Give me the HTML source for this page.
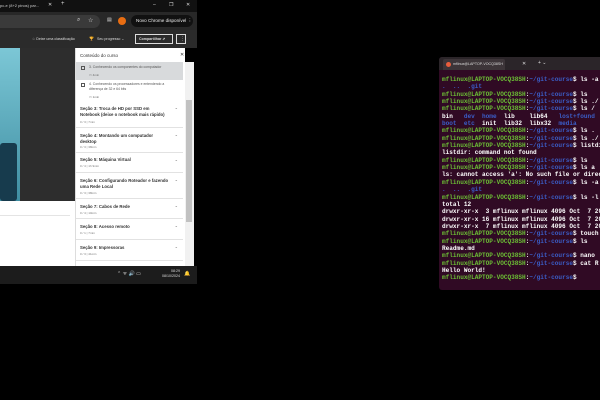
<!DOCTYPE html>
<html><head><style>
*{margin:0;padding:0;box-sizing:border-box}
body{width:600px;height:400px;background:#000;position:relative;overflow:hidden;font-family:"Liberation Sans",sans-serif}
.a{position:absolute}
.t{font-size:4px;color:#ddd;white-space:nowrap}
.sec{position:absolute;left:76px;width:107px;border-bottom:1px solid #e2e2e2;background:#fff}
.sec b{position:absolute;left:4px;font-size:4.3px;color:#333;line-height:5.5px;width:90px}
.sec i{position:absolute;left:4px;font-style:normal;font-size:3px;color:#777}
.sec s{position:absolute;right:5px;top:4px;text-decoration:none;font-size:4px;color:#666}
.term{position:absolute;left:439px;top:57px;width:161px;height:233px;background:#300a24;border-radius:3px 0 0 3px;overflow:hidden}
.tl{position:absolute;left:3px;font-family:"Liberation Mono",monospace;font-weight:bold;font-size:6.07px;white-space:pre;color:#fff;line-height:7.35px}
.g{color:#6cbf35}.bl{color:#3b5ec8}
</style></head><body>
<!-- browser -->
<div class="a" style="left:0;top:0;width:197px;height:12px;background:#111"></div>
<div class="a t" style="left:0;top:3px;font-size:4px;color:#ccc">pc-e (8+2 pinos) par...</div>
<div class="a t" style="left:48px;top:2px;font-size:5px">✕</div>
<div class="a t" style="left:61px;top:1px;font-size:6px">+</div>
<div class="a t" style="left:153px;top:2px;font-size:5px">–</div>
<div class="a t" style="left:169px;top:2px;font-size:5px">❐</div>
<div class="a t" style="left:186px;top:2px;font-size:5px">✕</div>
<div class="a" style="left:0;top:12px;width:197px;height:18px;background:#282828"></div>
<div class="a" style="left:0;top:15px;width:100px;height:13px;background:#3a3a3a;border-radius:0 7px 7px 0"></div>
<div class="a t" style="left:77px;top:17px;font-size:6px">⌕</div>
<div class="a t" style="left:88px;top:17px;font-size:6px">☆</div>
<div class="a t" style="left:107px;top:17px;font-size:5px">▤</div>
<div class="a" style="left:118px;top:17px;width:8px;height:8px;border-radius:50%;background:#e86d12"></div>
<div class="a" style="left:131px;top:15px;width:62px;height:12px;border-radius:6px;background:#111"></div>
<div class="a t" style="left:136px;top:18px;font-size:4.6px;color:#eee">Novo Chrome disponível ⋮</div>
<div class="a" style="left:0;top:30px;width:197px;height:18px;background:#2b2b2b"></div>
<div class="a t" style="left:32px;top:37px;font-size:3.6px">☆ Deixe uma classificação</div>
<div class="a t" style="left:89px;top:36px;font-size:4px">🏆</div>
<div class="a t" style="left:97px;top:37px;font-size:3.6px">Seu progresso ⌄</div>
<div class="a" style="left:135px;top:34px;width:38px;height:10px;border:1px solid #ddd"></div>
<div class="a t" style="left:139px;top:37px;font-size:3.6px;font-weight:bold">Compartilhar ⇗</div>
<div class="a" style="left:176px;top:34px;width:10px;height:10px;border:1px solid #ddd"></div>
<div class="a t" style="left:180px;top:36px;font-size:5px">⋮</div>
<div class="a" style="left:0;top:48px;width:20px;height:153px;background:linear-gradient(#7cc7d6,#3f8ea2)"></div>
<div class="a" style="left:0;top:143px;width:17px;height:58px;background:#173b4d;border-radius:3px"></div>
<div class="a" style="left:20px;top:48px;width:56px;height:153px;background:#2d2d2d"></div>
<div class="a" style="left:0;top:201px;width:76px;height:65px;background:#fff"></div>
<div class="a" style="left:0;top:215px;width:70px;height:1px;background:#e4e4e4"></div>
<!-- sidebar -->
<div class="a" style="left:75px;top:48px;width:110px;height:218px;background:#fff;border-left:1px solid #ddd"></div>
<div class="a" style="left:80px;top:53px;font-size:4.5px;color:#333">Conteúdo do curso</div>
<div class="a" style="left:180px;top:52px;font-size:5px;color:#333">✕</div>
<div class="a" style="left:76px;top:62px;width:107px;height:18px;background:#d8dadc"></div>
<div class="a" style="left:81px;top:66px;width:4px;height:4px;border:1px solid #555"></div>
<div class="a" style="left:89px;top:65px;font-size:3.4px;color:#555">3. Conhecendo os componentes do computador</div>
<div class="a" style="left:89px;top:73px;font-size:3px;color:#666">▭ 4min</div>
<div class="a" style="left:81px;top:83px;width:4px;height:4px;border:1px solid #555"></div>
<div class="a" style="left:89px;top:82px;font-size:3.4px;color:#555;line-height:5px">4. Conhecendo os processadores e entendendo a<br>diferença de 32 e 64 bits</div>
<div class="a" style="left:89px;top:95px;font-size:3px;color:#666">▭ 1min</div>
<div class="sec" style="top:101px;height:27px"><b style="top:5px">Seção 3: Troca de HD por SSD em Notebook (deixe o notebook mais rápido)</b><i style="top:19px">0 / 3 | 7min</i><s>⌄</s></div>
<div class="sec" style="top:128px;height:25px"><b style="top:5px">Seção 4: Montando um computador desktop</b><i style="top:17px">0 / 3 | 38min</i><s>⌄</s></div>
<div class="sec" style="top:153px;height:20px"><b style="top:4px">Seção 5: Máquina Virtual</b><i style="top:11px">0 / 4 | 1h 9min</i><s>⌄</s></div>
<div class="sec" style="top:173px;height:26px"><b style="top:5px">Seção 6: Configurando Roteador e fazendo uma Rede Local</b><i style="top:18px">0 / 3 | 38min</i><s>⌄</s></div>
<div class="sec" style="top:199px;height:20px"><b style="top:5px">Seção 7: Cabos de Rede</b><i style="top:12px">0 / 4 | 10min</i><s>⌄</s></div>
<div class="sec" style="top:219px;height:21px"><b style="top:5px">Seção 8: Acesso remoto</b><i style="top:12px">0 / 1 | 7min</i><s>⌄</s></div>
<div class="sec" style="top:240px;height:21px"><b style="top:5px">Seção 9: Impressoras</b><i style="top:12px">0 / 3 | 41min</i><s>⌄</s></div>
<div class="a" style="left:185px;top:62px;width:9px;height:204px;background:#f1f1f1"></div>
<div class="a" style="left:186px;top:100px;width:6px;height:122px;background:#c1c1c1"></div>
<div class="a" style="left:0;top:266px;width:197px;height:18px;background:#1c1c1c"></div>
<div class="a t" style="left:117px;top:271px;font-size:5px">⌃ ᯤ 🔊 ▭</div>
<div class="a t" style="left:158px;top:269px;font-size:3.6px;text-align:right;line-height:5px;width:22px">08:29<br>08/10/2024</div>
<div class="a t" style="left:184px;top:271px;font-size:5px">🔔</div>
<!-- terminal -->
<div class="term">
<div class="a" style="left:0;top:0;width:161px;height:13px;background:#2b2529"></div>
<div class="a" style="left:4px;top:2px;width:62px;height:11px;background:#3d3539;border-radius:2px 2px 0 0"></div>
<div class="a" style="left:7px;top:5px;width:5px;height:5px;border-radius:50%;background:#e85d3c"></div>
<div class="a t" style="left:14px;top:5px;font-size:3.6px">mflinux@LAPTOP-VOCQ38SH</div>
<div class="a t" style="left:83px;top:4px;font-size:5px">✕</div>
<div class="a t" style="left:99px;top:3px;font-size:5px">+ ⌄</div>
<div class="tl" style="top:19px"><span class="g">mflinux@LAPTOP-VOCQ38SH</span>:<span class="bl">~/git-course</span>$ ls -a
<span class="bl">.  ..  .git</span>
<span class="g">mflinux@LAPTOP-VOCQ38SH</span>:<span class="bl">~/git-course</span>$ ls
<span class="g">mflinux@LAPTOP-VOCQ38SH</span>:<span class="bl">~/git-course</span>$ ls ./
<span class="g">mflinux@LAPTOP-VOCQ38SH</span>:<span class="bl">~/git-course</span>$ ls /
bin   <span class="bl">dev  home</span>  lib    lib64   <span class="bl">lost+found</span>
<span class="bl">boot  etc</span>  init  lib32  libx32  <span class="bl">media</span>
<span class="g">mflinux@LAPTOP-VOCQ38SH</span>:<span class="bl">~/git-course</span>$ ls .
<span class="g">mflinux@LAPTOP-VOCQ38SH</span>:<span class="bl">~/git-course</span>$ ls ./
<span class="g">mflinux@LAPTOP-VOCQ38SH</span>:<span class="bl">~/git-course</span>$ listdir
listdir: command not found
<span class="g">mflinux@LAPTOP-VOCQ38SH</span>:<span class="bl">~/git-course</span>$ ls
<span class="g">mflinux@LAPTOP-VOCQ38SH</span>:<span class="bl">~/git-course</span>$ ls a
ls: cannot access 'a': No such file or directory
<span class="g">mflinux@LAPTOP-VOCQ38SH</span>:<span class="bl">~/git-course</span>$ ls -a
<span class="bl">.  ..  .git</span>
<span class="g">mflinux@LAPTOP-VOCQ38SH</span>:<span class="bl">~/git-course</span>$ ls -l
total 12
drwxr-xr-x  3 mflinux mflinux 4096 Oct  7 20
drwxr-xr-x 16 mflinux mflinux 4096 Oct  7 20
drwxr-xr-x  7 mflinux mflinux 4096 Oct  7 20
<span class="g">mflinux@LAPTOP-VOCQ38SH</span>:<span class="bl">~/git-course</span>$ touch
<span class="g">mflinux@LAPTOP-VOCQ38SH</span>:<span class="bl">~/git-course</span>$ ls
Readme.md
<span class="g">mflinux@LAPTOP-VOCQ38SH</span>:<span class="bl">~/git-course</span>$ nano
<span class="g">mflinux@LAPTOP-VOCQ38SH</span>:<span class="bl">~/git-course</span>$ cat R
Hello World!
<span class="g">mflinux@LAPTOP-VOCQ38SH</span>:<span class="bl">~/git-course</span>$ </div>
</div>
</body></html>
